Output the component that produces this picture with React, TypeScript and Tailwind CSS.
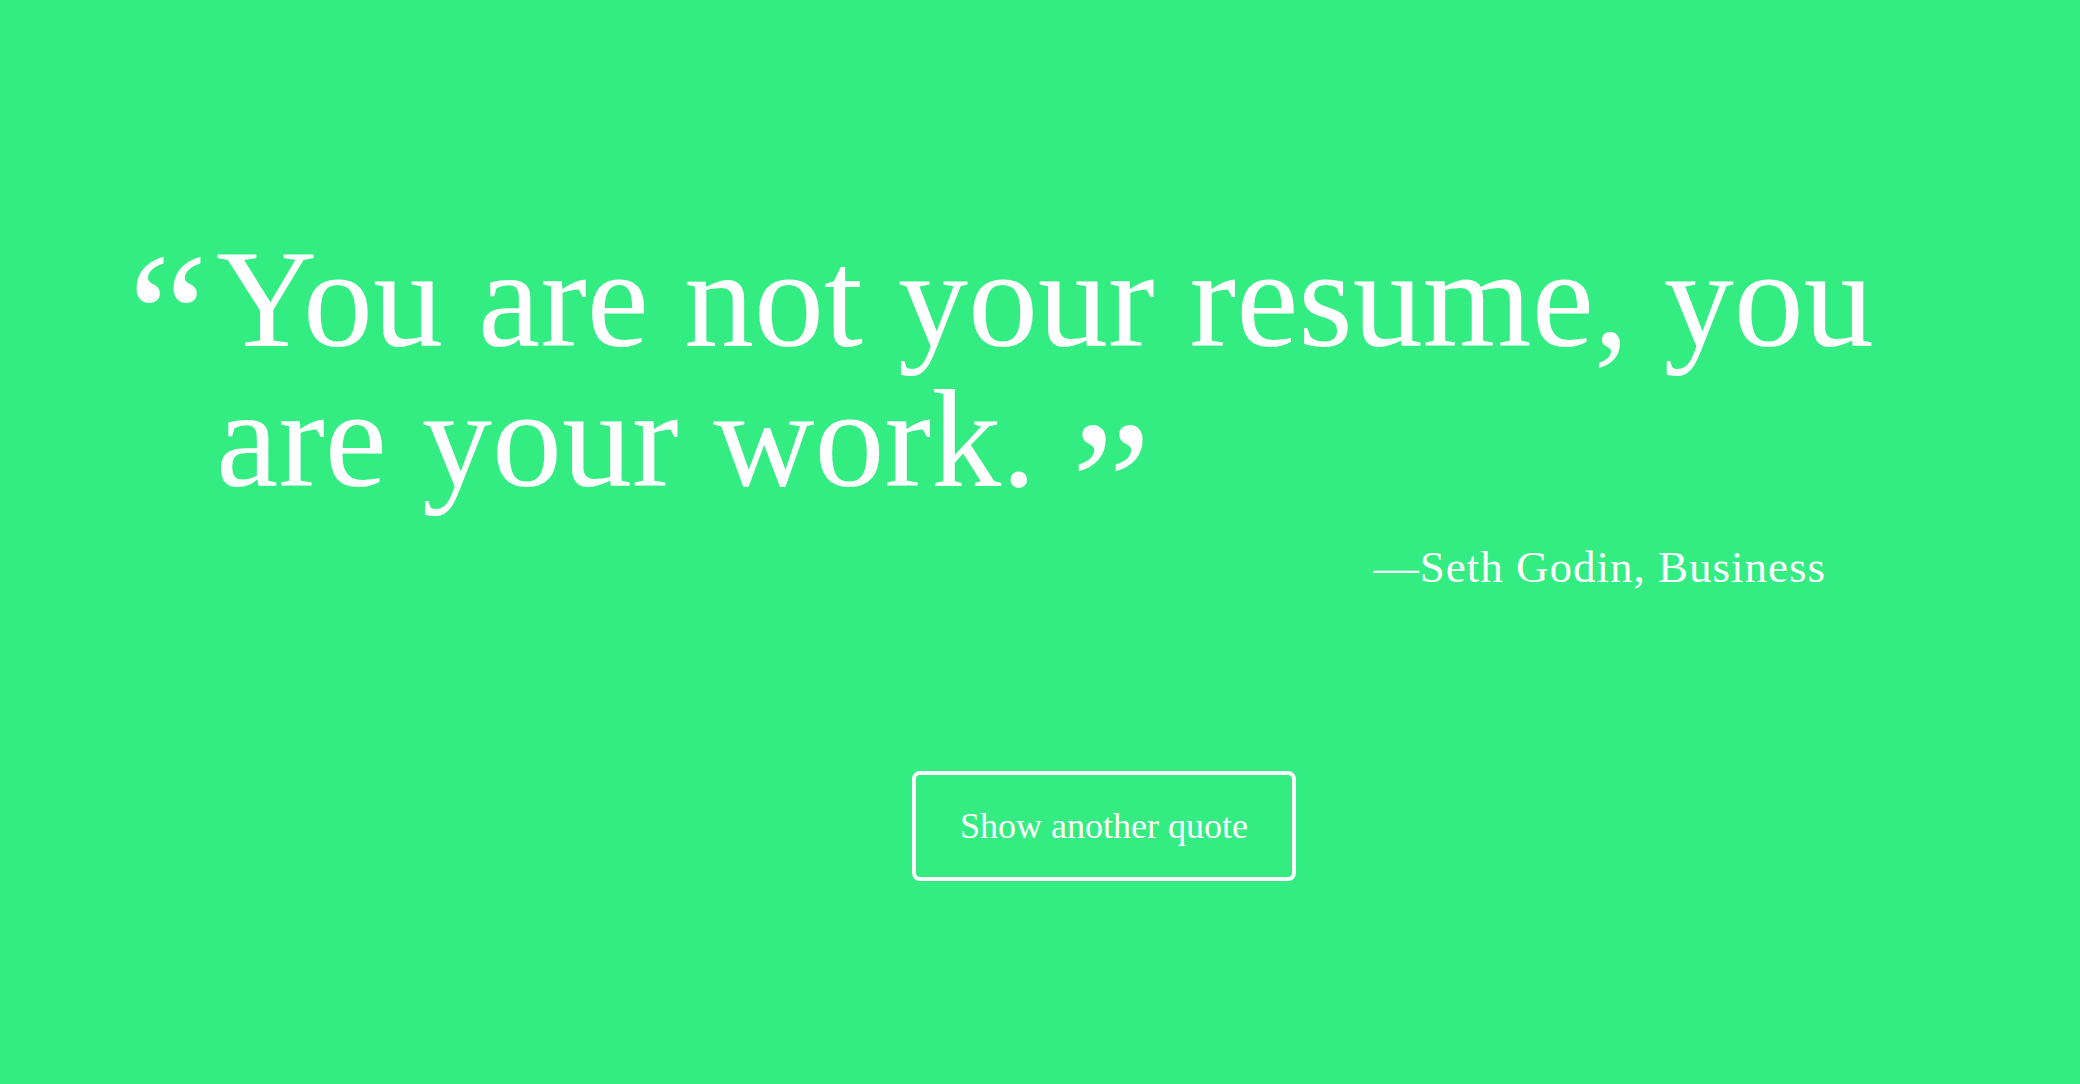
export default function App() {
  return (
    <main className="min-h-screen bg-[#33ed82] text-white font-['Liberation_Serif',serif]">
      <div className="pt-[229px] pl-[128px] pr-[100px]">
        <div className="flex">
          <span className="w-[88px] shrink-0 text-[180px] leading-none -mt-[2px]">“</span>
          <p className="text-[140px] leading-[140px]">
            You are not your resume, you are your work.
            <span className="ml-[35px] inline-block h-[100px] align-top text-[180px] leading-[140px] translate-y-[46px]">”</span>
          </p>
        </div>
        <div className="mt-[31px] mr-[154px] flex justify-end">
          <p className="text-[45px] leading-[54px] tracking-[1px]">—Seth Godin, Business</p>
        </div>
      </div>
      <div className="flex pl-[912px] pt-[177px]">
        <button className="flex h-[110px] w-[384px] items-center justify-center rounded-lg border-4 border-white text-[36px] leading-none">
          Show another quote
        </button>
      </div>
    </main>
  );
}
